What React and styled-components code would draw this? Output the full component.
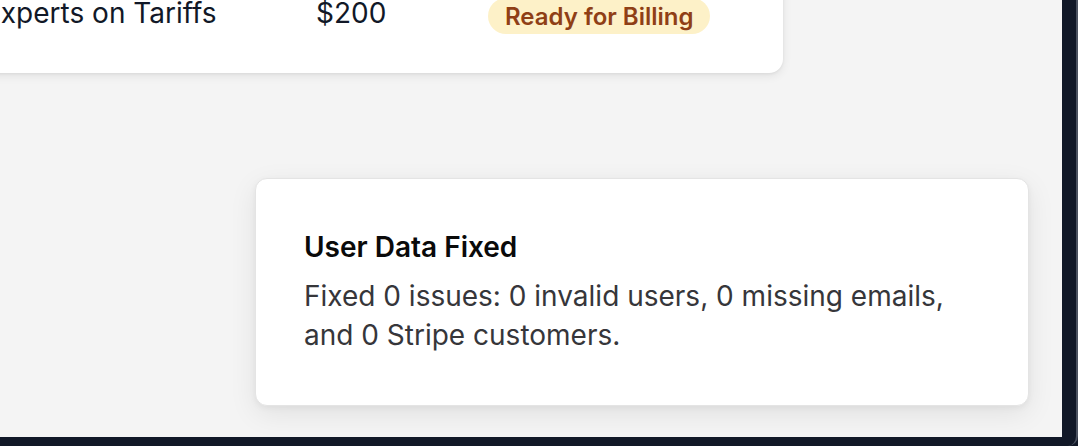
import React from 'react';
import styled, { createGlobalStyle } from 'styled-components';

const GlobalStyle = createGlobalStyle`
  html, body {
    margin: 0;
    padding: 0;
    background: #111827;
  }
  body {
    font-family: Inter, "Noto Sans", "Liberation Sans", sans-serif;
    -webkit-font-smoothing: antialiased;
  }
`;

const Frame = styled.div`
  width: 1078px;
  height: 446px;
  box-sizing: border-box;
  padding: 0 14px 9px 0;
  border-right: 2px solid #4b5260;
  border-bottom-right-radius: 10px;
  background: #111827;
  overflow: hidden;
`;

const Viewport = styled.main`
  height: 100%;
  background: #f4f4f4;
  overflow: hidden;
  display: flex;
  flex-direction: column;
`;

const Card = styled.section`
  width: 823px;
  margin: -30px 0 0 -40px;
  background: #ffffff;
  border-radius: 0 0 14px 14px;
  box-shadow: 0 3px 10px rgba(0, 0, 0, 0.08), 0 1px 3px rgba(0, 0, 0, 0.06);
`;

const Row = styled.div`
  display: grid;
  grid-template-columns: 332px 172px auto;
  align-items: start;
  padding: 26px 24px 39px;
  font-size: 28px;
  color: #111827;
`;

const Badge = styled.span`
  justify-self: start;
  margin-top: 2px;
  background: #fdf1c8;
  color: #8f3f16;
  font-size: 24px;
  font-weight: 600;
  padding: 3.5px 17px;
  border-radius: 999px;
`;

const Toast = styled.div`
  align-self: flex-end;
  width: 774px;
  box-sizing: border-box;
  margin: 105px 33px 0 0;
  padding: 50px 48px 50px;
  background: #ffffff;
  border: 1px solid #e4e4e4;
  border-radius: 12px;
  box-shadow: 0 8px 28px rgba(0, 0, 0, 0.08), 0 2px 6px rgba(0, 0, 0, 0.05);
`;

const ToastTitle = styled.div`
  font-size: 28px;
  font-weight: 600;
  color: #0a0a0a;
  line-height: 36px;
  margin-bottom: 12px;
`;

const ToastText = styled.div`
  font-size: 28px;
  color: #36363a;
  line-height: 39px;
`;

export default function App() {
  return (
    <>
      <GlobalStyle />
      <Frame>
        <Viewport>
          <Card>
            <Row>
              <span>Experts on Tariffs</span>
              <span>$200</span>
              <Badge>Ready for Billing</Badge>
            </Row>
          </Card>
          <Toast>
            <ToastTitle>User Data Fixed</ToastTitle>
            <ToastText>
              Fixed 0 issues: 0 invalid users, 0 missing emails,
              <br />
              and 0 Stripe customers.
            </ToastText>
          </Toast>
        </Viewport>
      </Frame>
    </>
  );
}
